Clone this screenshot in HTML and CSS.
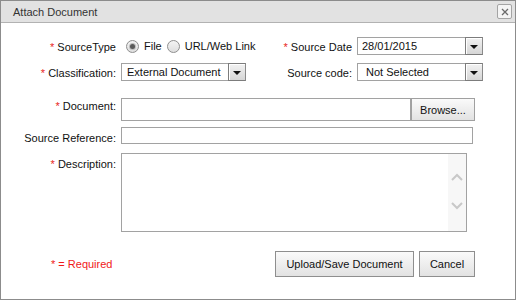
FILE: index.html
```html
<!DOCTYPE html>
<html>
<head>
<meta charset="utf-8">
<link rel="stylesheet" href="styles.css">
</head>
<body>
<div class="dialog">
  <div class="titlebar">
    <span class="title">Attach Document</span>
    <span class="close"><svg width="8" height="8" viewBox="0 0 8 8"><path d="M1 1L7 7M7 1L1 7" stroke="#6a6a6a" stroke-width="1.3"/></svg></span>
  </div>
  <div class="content">
    <div class="row r1">
      <label class="lbl"><span class="req">*</span> SourceType</label>
      <div class="col2 radios">
        <span class="radio checked"></span><span class="rtext">File</span>
        <span class="radio"></span><span class="rtext">URL/Web Link</span>
      </div>
      <label class="lbl2"><span class="req">*</span> Source Date</label>
      <div class="select w126"><span class="val">28/01/2015</span><span class="arrow"></span></div>
    </div>
    <div class="row r2">
      <label class="lbl"><span class="req">*</span> Classification:</label>
      <div class="col2">
        <div class="select w125"><span class="val v6">External Document</span><span class="arrow"></span></div>
      </div>
      <label class="lbl2">Source code:</label>
      <div class="select w126"><span class="val v9">Not Selected</span><span class="arrow"></span></div>
    </div>
    <div class="row r3 top">
      <label class="lbl p1"><span class="req">*</span> Document:</label>
      <div class="input doc"></div>
      <button class="btn browse">Browse...</button>
    </div>
    <div class="row r4 top">
      <label class="lbl p4">Source Reference:</label>
      <div class="input ref"></div>
    </div>
    <div class="row r5 top">
      <label class="lbl p4"><span class="req">*</span> Description:</label>
      <div class="textarea">
        <div class="scroll">
          <svg width="12" height="8" viewBox="0 0 12 8"><path d="M1 7L6 2L11 7" fill="none" stroke="#c8c8c8" stroke-width="2"/></svg>
          <svg width="12" height="8" viewBox="0 0 12 8"><path d="M1 1L6 6L11 1" fill="none" stroke="#c8c8c8" stroke-width="2"/></svg>
        </div>
      </div>
    </div>
    <div class="footer">
      <span class="required">* = Required</span>
      <div class="buttons">
        <button class="btn big upload">Upload/Save Document</button>
        <button class="btn big cancel">Cancel</button>
      </div>
    </div>
  </div>
</div>
</body>
</html>
```
FILE: styles.css
```css
* { box-sizing: border-box; }
body {
  margin: 0;
  font-family: "Liberation Sans", Arial, sans-serif;
  font-size: 11px;
  color: #111;
  background: #fff;
}
.dialog {
  width: 516px;
  height: 300px;
  border: 1px solid #8c8c8c;
  background: #fff;
}
.titlebar {
  height: 22px;
  background: #e2e2e2;
  border-bottom: 1px solid #b2b2b2;
  display: flex;
  align-items: center;
  justify-content: space-between;
  padding: 0 3px 0 12px;
}
.title {
  color: #333;
  font-size: 11px;
}
.close {
  width: 15px;
  height: 15px;
  border: 1px solid #a4a4a4;
  border-radius: 2px;
  background: #f4f4f4;
  display: flex;
  align-items: center;
  justify-content: center;
}
.content {
  padding-top: 14px;
}
.row {
  display: flex;
  align-items: center;
}
.row.top { align-items: flex-start; }
.r1 { height: 18px; }
.r2 { margin-top: 8px; height: 18px; }
.r3 { margin-top: 17px; }
.r4 { margin-top: 6px; }
.r5 { margin-top: 8px; }
.lbl {
  width: 115px;
  margin-right: 5px;
  text-align: right;
  line-height: 14px;
  padding-top: 1px;
}
.lbl.p1 { padding-top: 1px; }
.lbl.p4 { padding-top: 4px; }
.lbl2 {
  width: 96px;
  margin-right: 5px;
  text-align: right;
  line-height: 14px;
  padding-top: 1px;
}
.req { color: #e81c1c; }
.col2 {
  width: 135px;
  display: flex;
  align-items: center;
}
.radios { padding-left: 5px; }
.radio {
  width: 13px;
  height: 13px;
  border-radius: 50%;
  border: 1px solid #8e8e8e;
  background: linear-gradient(#f4f4f4, #dedede);
  display: inline-flex;
  align-items: center;
  justify-content: center;
  flex: none;
}
.radio.checked::after {
  content: "";
  width: 5px;
  height: 5px;
  border-radius: 50%;
  background: #5a5a5a;
  box-shadow: 0 0 0 1px #bdbdbd;
}
.rtext {
  margin-left: 5px;
  margin-right: 5px;
  white-space: nowrap;
}
.select {
  height: 18px;
  border: 1px solid #a2a2a2;
  border-right: none;
  background: #fff;
  display: flex;
  align-items: center;
  justify-content: space-between;
}
.w125 { width: 125px; }
.w126 { width: 126px; }
.val { padding-left: 4px; line-height: 14px; }
.val.v6 { padding-left: 5px; }
.val.v9 { padding-left: 8px; }
.arrow {
  width: 18px;
  height: 18px;
  margin-top: -1px;
  margin-bottom: -1px;
  border: 1px solid #7c7c7c;
  border-right-color: #8a8a8a;
  background: linear-gradient(#f2f2f2, #d6d6d6);
  box-shadow: inset 1px 1px 0 #fff;
  display: flex;
  align-items: center;
  justify-content: center;
  padding-top: 2px;
  flex: none;
}
.arrow::after {
  content: "";
  border-left: 4px solid transparent;
  border-right: 4px solid transparent;
  border-top: 4px solid #111;
}
.input {
  border: 1px solid #a2a2a2;
  background: #fff;
}
.input.doc { width: 290px; height: 23px; }
.input.ref { width: 352px; height: 17px; }
.btn {
  font-family: "Liberation Sans", Arial, sans-serif;
  font-size: 11px;
  color: #111;
  border: 1px solid #8e8e8e;
  background: linear-gradient(#fafafa, #e2e2e2);
  padding: 0;
  margin: 0;
}
.browse {
  width: 64px;
  height: 23px;
  border-color: #a0a0a0;
}
.textarea {
  width: 346px;
  height: 79px;
  border: 1px solid #a2a2a2;
  display: flex;
  justify-content: flex-end;
}
.scroll {
  width: 18px;
  height: 100%;
  background: #f7f7f7;
  display: flex;
  flex-direction: column;
  align-items: center;
  padding-top: 19px;
  gap: 21px;
}
.footer {
  margin-top: 19px;
  display: flex;
  align-items: center;
  justify-content: space-between;
  padding-left: 50px;
  padding-right: 40px;
}
.required {
  color: #f01818;
  font-size: 11px;
}
.buttons {
  display: flex;
  gap: 5px;
}
.big { height: 26px; }
.upload { width: 139px; }
.cancel { width: 56px; }
```
